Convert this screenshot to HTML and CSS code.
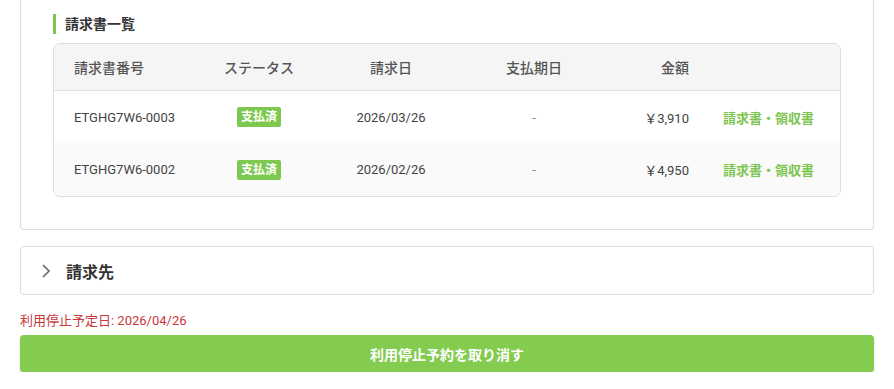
FILE: index.html
```html
<!DOCTYPE html>
<html lang="ja">
<head>
    <meta charset="UTF-8">
    <meta name="viewport" content="width=device-width, initial-scale=1.0">
    <title>請求書一覧</title>
    <link rel="stylesheet" href="styles.css">
</head>
<body>

    <div class="page">

        <!-- Invoice list card -->
        <section class="card">
            <h3 class="section-title">請求書一覧</h3>
            <div class="table-wrap">
                <table class="invoice-table">
                    <colgroup>
                        <col class="c-no">
                        <col class="c-status">
                        <col class="c-date">
                        <col class="c-due">
                        <col class="c-amount">
                        <col class="c-link">
                    </colgroup>
                    <thead>
                        <tr>
                            <th class="left">請求書番号</th>
                            <th>ステータス</th>
                            <th>請求日</th>
                            <th>支払期日</th>
                            <th class="right">金額</th>
                            <th></th>
                        </tr>
                    </thead>
                    <tbody>
                        <tr>
                            <td class="left">ETGHG7W6-0003</td>
                            <td><span class="badge">支払済</span></td>
                            <td>2026/03/26</td>
                            <td class="muted">-</td>
                            <td class="right">￥3,910</td>
                            <td class="link-cell"><a href="#" class="doc-link">請求書・領収書</a></td>
                        </tr>
                        <tr>
                            <td class="left">ETGHG7W6-0002</td>
                            <td><span class="badge">支払済</span></td>
                            <td>2026/02/26</td>
                            <td class="muted">-</td>
                            <td class="right">￥4,950</td>
                            <td class="link-cell"><a href="#" class="doc-link">請求書・領収書</a></td>
                        </tr>
                    </tbody>
                </table>
            </div>
        </section>

        <!-- Billing address (collapsed) -->
        <div class="accordion">
            <svg class="chevron" width="10" height="16" viewBox="0 0 10 16">
                <path d="M2 2 L8 8 L2 14" fill="none" stroke="#666" stroke-width="1.6"/>
            </svg>
            <span class="accordion-title">請求先</span>
        </div>

        <p class="stop-date">利用停止予定日: 2026/04/26</p>
        <button class="cancel-btn">利用停止予約を取り消す</button>

    </div>

</body>
</html>
```

FILE: styles.css
```css
body {
    font-family: Roboto, "Noto Sans CJK JP", sans-serif;
    margin: 0;
    padding: 0;
    background-color: #fff;
    color: #333;
}

.page {
    padding: 0 20px;
}

/* Card (scrolled, top edge is above the viewport) */
.card {
    border: 1px solid #ddd;
    border-top: none;
    border-radius: 0 0 4px 4px;
    padding: 14px 32px 32px 32px;
}

.section-title {
    margin: 0 0 9px 0;
    padding-left: 9px;
    border-left: 3px solid #7dc94f;
    font-size: 14px;
    font-weight: 700;
    line-height: 20px;
    color: #333;
}

.table-wrap {
    border: 1px solid #ddd;
    border-radius: 7px;
    overflow: hidden;
}

.invoice-table {
    width: 100%;
    border-collapse: collapse;
    table-layout: fixed;
    font-size: 13px;
}

.c-no { width: 137px; }
.c-status { width: 136px; }
.c-date { width: 128px; }
.c-due { width: 158px; }
.c-amount { width: 95px; }

.invoice-table th {
    background-color: #f5f5f5;
    height: 46px;
    padding: 0;
    font-size: 14px;
    font-weight: 500;
    color: #555;
    text-align: center;
    border-bottom: 1px solid #e2e2e2;
}

.invoice-table td {
    height: 52px;
    text-align: center;
    color: #444;
    padding: 0;
}

.invoice-table tbody tr:nth-child(2) td {
    background-color: #fafafa;
    height: 53px;
}

.invoice-table .left {
    text-align: left;
    padding-left: 20px;
}

.invoice-table .right {
    text-align: right;
    padding-right: 19px;
}

.invoice-table .link-cell {
    text-align: left;
    padding-left: 15px;
}

.muted {
    color: #888 !important;
}

.badge {
    display: inline-block;
    background-color: #7dc94f;
    color: #fff;
    font-size: 12px;
    font-weight: 700;
    line-height: 20px;
    padding: 0 4px;
    border-radius: 2px;
}

.doc-link {
    color: #7cc54f;
    font-weight: 700;
    text-decoration: none;
}

/* Accordion */
.accordion {
    display: flex;
    align-items: center;
    margin-top: 16px;
    height: 47px;
    border: 1px solid #ddd;
    border-radius: 4px;
    padding-left: 20px;
}

.chevron {
    margin-right: 15px;
}

.accordion-title {
    font-size: 16px;
    font-weight: 700;
    color: #333;
}

.stop-date {
    margin: 17px 0 5px 0;
    font-size: 13px;
    line-height: 18px;
    color: #c8373c;
}

.cancel-btn {
    display: block;
    width: 100%;
    height: 37px;
    border: none;
    border-radius: 4px;
    background-color: #84cc4f;
    color: #fff;
    font-family: inherit;
    font-size: 14px;
    font-weight: 700;
    box-shadow: 0 2px 2px rgba(0, 0, 0, 0.2);
    cursor: pointer;
}
```
